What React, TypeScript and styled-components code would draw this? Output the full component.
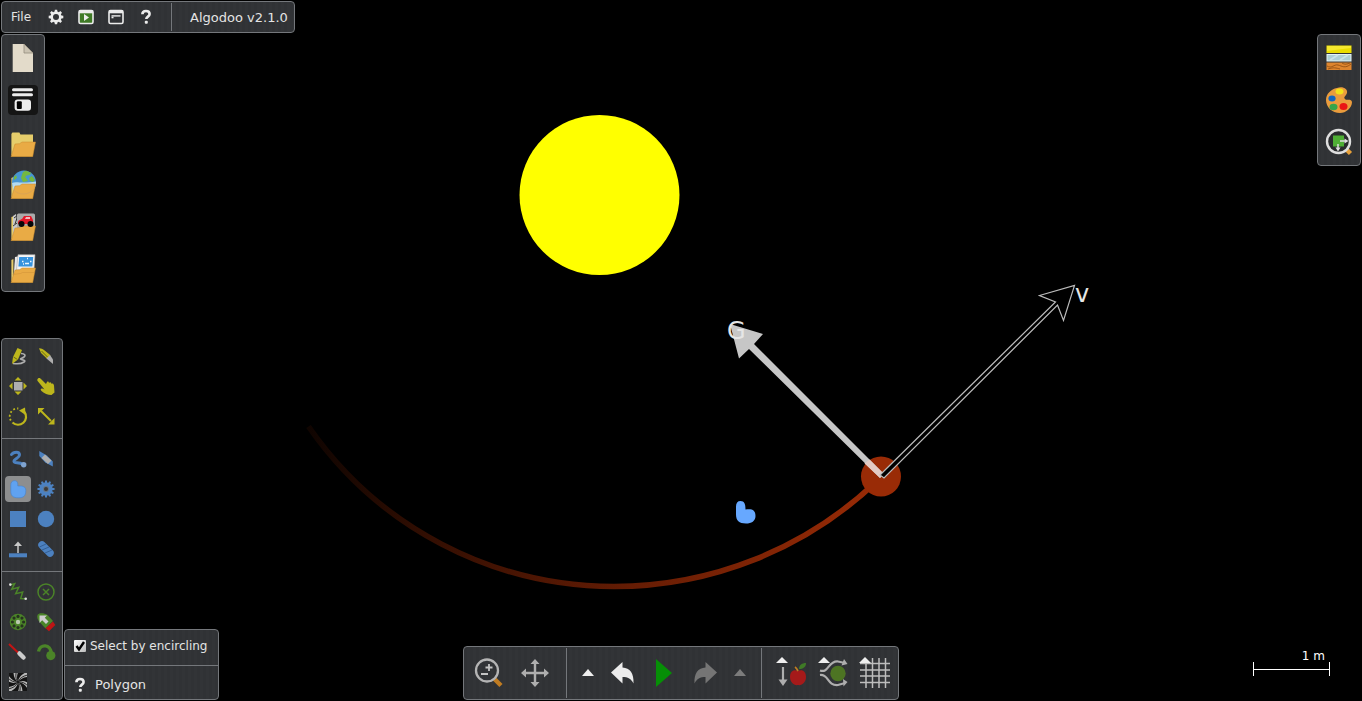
import React from "react";
import styled, { createGlobalStyle } from "styled-components";

const c = {
  panel: "#313336",
  line: "#74777b",
  text: "#e4e4e4",
  yellow: "#bdb61c",
  blue: "#4c81c0",
  blueDark: "#345f94",
  green: "#4b8428",
  grey: "#aeaeae",
  white: "#ececec",
  red: "#c41414",
  orange: "#e9ab45",
};

const GlobalStyle = createGlobalStyle`
  * { box-sizing: border-box; }
  body { margin: 0; background: #000; }
  button, label, a { font: inherit; color: inherit; }
`;

const Page = styled.div`
  position: relative;
  display: flex;
  flex-direction: column;
  min-height: 100vh;
  padding: 1px;
  overflow: hidden;
  background: #000;
  color: ${c.text};
  font: 12px/16px "DejaVu Sans", Verdana, sans-serif;
`;

const Scene = styled.svg`
  position: absolute;
  inset: 0;
  width: 100%;
  height: 100%;
`;

const panel = `
  position: relative;
  background: repeating-linear-gradient(90deg, #303235 0 3px, #323437 3px 6px);
  border: 1px solid ${c.line};
  border-radius: 4px;
`;

const MenuBar = styled.header`
  ${panel}
  align-self: flex-start;
  display: flex;
  height: 32px;
`;

const MenuItems = styled.nav`
  display: flex;
  align-items: center;
  padding: 0 10px 0 9px;
`;

const Title = styled.div`
  margin: 1px 0;
  padding: 1px 6px 0 18px;
  border-left: 1px solid ${c.line};
  font-size: 13px;
  line-height: 28px;
`;

const Btn = styled.button<{ $w: number; $h: number; $bg?: string }>`
  display: flex;
  align-items: center;
  justify-content: center;
  width: ${(p) => p.$w}px;
  height: ${(p) => p.$h}px;
  padding: 0;
  border: 0;
  border-radius: 4px;
  background: ${(p) => p.$bg ?? "transparent"};
  svg { display: block; }
`;

const MenuText = styled.button`
  padding: 0;
  margin-right: 10px;
  border: 0;
  background: none;
`;

const Middle = styled.main`
  flex: 1;
  display: flex;
  justify-content: space-between;
  align-items: flex-start;
  margin: 1px 0 46px;
`;

const SidePanel = styled.aside`
  ${panel}
  display: flex;
  flex-direction: column;
  gap: 12px;
  padding: 8px 6px;
`;

const Bottom = styled.footer`
  display: grid;
  grid-template-columns: 1fr auto 1fr;
  align-items: end;
`;

const LeftTools = styled.div`
  display: flex;
  align-items: flex-end;
  gap: 1px;
`;

const ToolPanel = styled.section`
  ${panel}
`;

const ToolGroup = styled.div`
  display: grid;
  grid-template-columns: 26px 26px;
  gap: 4px 2px;
  padding: 7px 3px 9px;
  & + & { border-top: 1px solid ${c.line}; }
  &:first-child { padding-top: 4px; }
  &:last-child { padding-bottom: 4px; }
`;

const Options = styled.section`
  ${panel}
  width: 155px;
`;

const CheckRow = styled.label`
  display: flex;
  align-items: center;
  gap: 4px;
  height: 35px;
  padding: 0 0 4px 9px;
  white-space: nowrap;
`;

const Check = styled.input`
  appearance: none;
  width: 12px;
  height: 12px;
  margin: 0;
  border-radius: 1px;
  background: linear-gradient(135deg, #fff, #bbb);
  &:checked {
    background: url("data:image/svg+xml,%3Csvg xmlns='http://www.w3.org/2000/svg' viewBox='0 0 12 12'%3E%3Cpath d='M2.5 6l2.5 3.5L10 2' fill='none' stroke='black' stroke-width='2.4'/%3E%3C/svg%3E"),
      linear-gradient(135deg, #fff, #bbb);
  }
`;

const HelpRow = styled.div`
  display: flex;
  align-items: center;
  gap: 9px;
  height: 34px;
  padding: 4px 0 0 9px;
  border-top: 1px solid ${c.line};
  font-size: 13px;
`;

const Dock = styled.nav`
  ${panel}
  display: flex;
  height: 54px;
`;

const DockGroup = styled.div<{ $pad: string; $gap?: number }>`
  display: flex;
  align-items: center;
  gap: ${(p) => p.$gap ?? 0}px;
  margin: 1px 0;
  padding: ${(p) => p.$pad};
  & + & { border-left: 1px solid ${c.line}; }
`;

const Scale = styled.div`
  position: relative;
  justify-self: end;
  width: 77px;
  margin: 0 31px 24px 0;
`;

const ScaleLabel = styled.div`
  padding-right: 5px;
  text-align: right;
  line-height: 12px;
  color: #fff;
`;

const ScaleLine = styled.div`
  display: flex;
  align-items: center;
  height: 14px;
  border: solid #fff;
  border-width: 0 1px;
  &::before { content: ""; flex: 1; height: 1px; background: #fff; }
`;

const Svg = ({ w = 26, h = w, children }: { w?: number; h?: number; children: React.ReactNode }) => (
  <svg width={w} height={h} viewBox={`0 0 ${w} ${h}`} fill="none" aria-hidden="true">{children}</svg>
);

const gearPath = (cx: number, cy: number, ri: number, ro: number, n: number) => {
  const pts: string[] = [];
  for (let i = 0; i < n; i++) {
    [[-0.32, ri], [-0.2, ro], [0.2, ro], [0.32, ri]].forEach(([o, r]) => {
      const a = ((i + o) / n) * Math.PI * 2 - Math.PI / 2;
      pts.push(`${(cx + r * Math.cos(a)).toFixed(2)} ${(cy + r * Math.sin(a)).toFixed(2)}`);
    });
  }
  return `M${pts.join("L")}Z`;
};

const Question = () => (
  <Svg w={12} h={16}>
    <path d="M2.4 5.2C2.4 2.8 4 2 6 2s3.6 1 3.6 3c0 2.6-3.3 2.6-3.3 5" stroke={c.white} strokeWidth="2.6" />
    <rect x="4.8" y="11.8" width="3" height="3" rx="1" fill={c.white} />
  </Svg>
);

const menuIcons: [string, React.ReactNode][] = [
  ["Settings", <Svg w={16}><path d={gearPath(8, 8, 5.6, 7.4, 8)} fill={c.white} /><circle cx="8" cy="8" r="3" fill={c.panel} /></Svg>],
  ["Play scenes", <Svg w={16}><rect x="1" y="1.5" width="14" height="13" rx="1.5" fill="#3f7a26" stroke={c.white} strokeWidth="1.6" /><path d="M1 2.8h14" stroke={c.white} strokeWidth="3" /><path d="M6 5l5 3.6L6 12z" fill={c.white} /></Svg>],
  ["Console", <Svg w={16}><rect x="1" y="1.5" width="14" height="13" rx="1.5" stroke={c.white} strokeWidth="1.6" /><path d="M1 2.8h14" stroke={c.white} strokeWidth="3" /><path d="M3.5 8.5h2" stroke={c.white} strokeWidth="1.6" /><path d="M3.5 6.9h9" stroke={c.white} strokeWidth="1.4" /></Svg>],
  ["Help", <Question />],
];

const Front = () => <path d="M7 17l4.500-.3 2.500-1.700h13.5L24.7 29.7H3z" fill={c.orange} stroke="#c98a2c" strokeWidth=".5" />;
const Back = () => <path d="M3.4 28V7l1-1.5h7l1 2H25V20L6 29z" fill="#e6cd6b" />;

const fileIcons: [string, React.ReactNode, string?][] = [
  ["New scene", <Svg w={30}><path d="M4.7 1H16l9 9v19H4.7z" fill="#e3dbca" /><path d="M16 1l9 9h-9z" fill="#cbc3b2" stroke="#948d7e" strokeWidth=".8" /></Svg>],
  ["Save scene", <Svg w={30}><path d="M5.5 4.8h18M5.5 9.8h18" stroke={c.white} strokeWidth="3" strokeLinecap="round" /><rect x="6.6" y="14.4" width="16.4" height="11.4" rx="3" fill={c.white} /><rect x="8.8" y="16.3" width="5" height="7.6" rx="1" fill="#000" /></Svg>, "#151515"],
  ["Load scene", <Svg w={30}><Back /><Front /></Svg>],
  ["Browse online scenes", <Svg w={30}>
    <path d="M3.4 28V9l2-1 2 2v16z" fill="#e6cd6b" />
    <circle cx="16" cy="13.5" r="12" fill="#4795d2" />
    <path d="M4 14C8 12 14 15 28 12.500c0 5-2 9-5 11H6z" fill="#b5dcf0" />
    <path d="M15 3l3-1.200 5 2-1 2-4 1-1 3-4-1 1-3zM13 9l5 0 2 3-5 1zM21 9l3-2 3 4-2 2-3-1zM6 8l2-2 1 3-3 2z" fill="#74b83f" />
    <Front /><path d="M6 21c4 5 14 6 20-1" stroke="#dba455" strokeWidth="1" />
  </Svg>],
  ["Components", <Svg w={30}>
    <path d="M3.4 28V6l3-1v22z" fill="#e6cd6b" /><path d="M5 26V5l3-2 3 22z" fill="#c8c8c8" />
    <path d="M6 7l4-3-3 9M5 15l4-3" stroke="#333" strokeWidth="1" />
    <rect x="9" y="2.500" width="18" height="14.500" rx="1.5" fill="#aaa" />
    <path d="M10 12c0-3 2-3 4-4l2-3h7l2 4v4H10z" fill="#e3192a" /><path d="M17 8l1-2h4v2z" fill="#f6b6bb" />
    <Front /><circle cx="13.5" cy="13" r="3" fill="#080808" /><circle cx="22.5" cy="13" r="3" fill="#080808" />
  </Svg>],
  ["Scenes and images", <Svg w={30}>
    <path d="M3.4 28V7l2-1v21z" fill="#e6cd6b" /><path d="M5.5 26L7 4l5-1v20z" fill="#e8e8e8" />
    <path d="M10 1.700h17L26 17H8.500z" fill="#f5f5f5" stroke="#aaa" strokeWidth=".6" />
    <path d="M11.200 4h14l-.8 9.500h-14z" fill="#3793de" /><path d="M14 8.500h1.500M17 10.500h4M22 8.500h1.500M19 5.500h1M15 11h1" stroke="#e9f5ff" strokeWidth="1.4" />
    <Front /><path d="M4.500 21.500l8-1 2-1h12" stroke="#cf9138" strokeWidth=".5" />
  </Svg>],
];

const rightIcons: [string, React.ReactNode][] = [
  ["Materials", <Svg w={30}>
    <rect x="2.500" y="2.500" width="25" height="7.500" fill="#eadd00" /><path d="M3 3h24v2L3 8z" fill="#fff45c" opacity=".5" />
    <rect x="3" y="11.500" width="24" height="6.500" fill="#accfd5" stroke="#e4f4f6" /><path d="M6 17l8-5M16 17l8-5" stroke="#c8e2e6" strokeWidth="2" />
    <rect x="2.500" y="19.500" width="25" height="7.500" fill="#dd852e" /><path d="M3 23c5 3 7-2 11-1s7 4 13-1M4 26c6-2 8-1 12 0M18 20c3 2 5 1 8 0" stroke="#8a4a10" strokeWidth=".8" />
  </Svg>],
  ["Appearance", <Svg w={30}>
    <path d="M13 3c6-2 11 1 10 5-1 3-4 4-2 6s6-1 7 3c0 6-6 11-12 11C8 28 2 22 2 15 2 9 7 4 13 3z" fill="#ea9c3d" />
    <ellipse cx="15.500" cy="6.500" rx="4" ry="3" fill="#f2e21a" /><ellipse cx="8" cy="13.500" rx="3.600" ry="3" fill="#1266c0" />
    <ellipse cx="9.500" cy="22" rx="4" ry="3.200" fill="#35a54a" /><ellipse cx="19.500" cy="21.500" rx="4" ry="3.500" fill="#ea1515" />
  </Svg>],
  ["Visualization", <Svg w={30}>
    <path d="M22 22l4.500 4.500" stroke="#e8a13a" strokeWidth="4.500" /><circle cx="14.500" cy="14.500" r="11.500" fill="#292b2d" stroke="#dedede" strokeWidth="2.400" />
    <rect x="9" y="8.500" width="11" height="11" fill="#4faf35" /><path d="M16 14h5M14 17v5" stroke="#dedede" strokeWidth="1.500" />
    <path d="M20.500 11.500l4 2.500-4 2.500zM11.500 20.500l2.500 4 2.500-4z" fill="#dedede" />
  </Svg>],
];

const Sh = ({ d, s, w = 1.5 }: { d: string; s: string; w?: number }) => <path d={d} stroke={s} strokeWidth={w} />;

const tools: [string, React.ReactNode][][] = [
  [
    ["Sketch", <Svg>
      <Sh d="M16 10.500c4 0 5 2 3 3.500s-5 1.500-2.500 2.500 4.500 1 2.500 2.500-7 2-11 1.500" s={c.grey} w={1.600} />
      <path d="M7 21l1-7 4.500-9 4.500 2-4 9.500z" fill={c.yellow} /><Sh d="M8.500 14l4 2.500" s="#6a6714" w={1} />
    </Svg>],
    ["Cut", <Svg><path d="M6 5.300c3 0 4 1 6 2.500l5.500 4.500-3.500 3.500L8 10z" fill={c.yellow} /><path d="M13.500 15.500l3.500-3.500 3 4.500v4.500z" fill={c.grey} /><Sh d="M8.500 8l6 6" s="#6a6714" w={1} /></Svg>],
    ["Move", <Svg><rect x="9" y="9" width="8.500" height="8.500" fill={c.grey} /><path d="M9.500 7.500L13 4l3.500 3.500zM9.500 18.500L13 22l3.500-3.500zM7.500 9.500L4 13l3.500 3.500zM18.500 9.500L22 13l-3.500 3.500z" fill={c.yellow} /></Svg>],
    ["Drag", <Svg><path d="M5 5.500c1.500-1 2.500 0 3.500 1l4.500 4.500 1-2c1-1 2 0 2 1 1-1.500 2.500-.500 2.500 1 1.500-1 2 0 2.500 1.500l.500 7-3 2.500c-4 0-7-1.500-10-4-2-2 0-3.500 3-1.500L5 8.500C4 7.500 4 6.500 5 5.500z" fill={c.yellow} /></Svg>],
    ["Rotate", <Svg><path d="M19.500 9a8 8 0 0 1-12 10.500" stroke={c.yellow} strokeWidth="2.200" /><path d="M5.800 17.500a8 8 0 0 1 7.500-12" stroke={c.yellow} strokeWidth="1.800" strokeDasharray="1.800 2.200" /><path d="M14 7.500l6-3 .500 7.500z" fill={c.yellow} /></Svg>],
    ["Scale", <Svg><Sh d="M8 8l10 10" s={c.yellow} w={2} /><path d="M5 5h6.500L5 11.500zM21.500 21.500H15l6.500-6.500z" fill={c.yellow} /></Svg>],
  ],
  [
    ["Brush", <Svg><path d="M6.500 8.500c2-3 8-3.500 8 .500 0 3-6 4-5.500 6.500.500 2.500 5 0 9 3" stroke={c.blue} strokeWidth="3" strokeLinecap="round" /><circle cx="18.700" cy="18.800" r="2.700" fill="#7fa3cf" /></Svg>],
    ["Knife", <Svg><path d="M6.300 5l7.500 4.500 6 6v5l-7.500-4-6-6.500z" fill={c.blue} /><path d="M12 8.500l6.500 6-3.500 3.500-6.500-6z" fill={c.grey} /></Svg>],
    ["Polygon", <Svg><path d="M9.500 4.700c2.500 0 3.400 1.500 3.300 5.300 3 0 8-.500 8 4.500 0 5.500-2.500 7.300-7.200 7.300C8 21.800 5.800 20 5.800 15V9c0-2.500 1.200-4.300 3.700-4.300z" fill="#60a2f0" stroke="#4583cc" strokeWidth=".6" /></Svg>],
    ["Gear", <Svg><path d={gearPath(13, 13, 6.600, 8.600, 12)} fill={c.blue} /><circle cx="13" cy="13" r="2.900" fill="#66737f" /><circle cx="13" cy="13" r="2" fill="#3d3a38" /></Svg>],
    ["Box", <Svg><rect x="5" y="5" width="16" height="16" fill={c.blue} /></Svg>],
    ["Circle", <Svg><circle cx="13" cy="13" r="8.200" fill={c.blue} /></Svg>],
    ["Plane", <Svg><rect x="4" y="17.300" width="18" height="4" fill={c.blue} /><Sh d="M13 17V8" s="#c8c8c8" w={1.500} /><path d="M9 10l4-4.500 4 4.500z" fill="#c8c8c8" /></Svg>],
    ["Chain", <Svg><path d="M9 9l8 8" stroke={c.blue} strokeWidth="7.500" strokeLinecap="round" /><Sh d="M6.500 11l6.500-3M9 14l7-3M12 17l7-3" s={c.blueDark} w={1} /></Svg>],
  ],
  [
    ["Spring", <Svg><Sh d="M5.700 5.700l4-1-3 5.600 7-2-3 6.400 7-1.700-2 6.500 4.600.2" s={c.green} w={1.500} /><circle cx="5.300" cy="5.600" r="1.300" fill="#ddd" /><circle cx="20.700" cy="19.800" r="1.300" fill="#ddd" /></Svg>],
    ["Axle", <Svg><circle cx="13" cy="13" r="8" stroke={c.green} strokeWidth="1.500" /><Sh d="M10 10l6 6M16 10l-6 6" s={c.green} /></Svg>],
    ["Fixate", <Svg><circle cx="13" cy="13" r="8.300" fill={c.green} />{[0, 1, 2, 3, 4, 5, 6, 7].map((i) => <circle key={i} cx={13 + 5.600 * Math.cos((i * Math.PI) / 4)} cy={13 + 5.600 * Math.sin((i * Math.PI) / 4)} r="1.600" fill="#26331f" />)}<circle cx="13" cy="13" r="2.200" fill="#b9c9ae" /></Svg>],
    ["Thruster", <Svg><path d="M4.500 6c1-2.500 7-2 10 0l5.500 6-7.500 7.500-6-6.500C5 11 3.500 8.500 4.500 6z" fill={c.green} /><path d="M20 12.500l2.300 3.500-6.300 6.300-3.500-3z" fill="#bd1515" /><path d="M6.500 6.500h7.500l-2.200 2.200 3.700 3.800-2.500 2.500-3.800-3.700L6.500 14z" fill="#ccc" /></Svg>],
    ["Laser", <Svg><Sh d="M4 5l10 9.500" s={c.red} w={2} /><path d="M14.500 14.500l4 4" stroke="#ccc" strokeWidth="4.500" strokeLinecap="round" /></Svg>],
    ["Tracer", <Svg><path d="M5.500 12.500C7 4.500 18 5 18 14" stroke={c.green} strokeWidth="3.400" /><circle cx="17.800" cy="16.600" r="4.600" fill={c.green} /></Svg>],
    ["Texture", <Svg>
      <clipPath id="swirl"><rect x="4" y="4" width="18" height="18" /></clipPath>
      <g clipPath="url(#swirl)">
        <rect x="4" y="4" width="18" height="18" fill="#141414" />
        {Array.from({ length: 12 }, (_, i) => <path key={i} d="M13 13C13.500 9 16 5 23 2.500L26.500 8C20 7.500 15.500 9.500 13 13z" fill="#b8b8b8" transform={`rotate(${i * 30} 13 13)`} opacity={i % 2 ? 0 : 1} />)}
        {Array.from({ length: 6 }, (_, i) => <path key={i} d="M13 13C13.500 10 16 6 23 4" stroke="#141414" strokeWidth=".8" transform={`rotate(${i * 60 + 10} 13 13)`} />)}
      </g>
    </Svg>],
  ],
];

const Tri = ({ fill }: { fill: string }) => <Svg w={12} h={8}><path d="M0 7L6 0l6 7z" fill={fill} /></Svg>;

const undo = "M2 12.500L13.500 2v5.500C21 8 25 13 24.500 23.500 22 18.500 19 17 13.500 17v6.500z";

const SceneView = () => (
  <Scene viewBox="0 0 1362 701" preserveAspectRatio="xMidYMid slice" role="img" aria-label="Planet orbiting a sun">
    <defs>
      <linearGradient id="trail" gradientUnits="userSpaceOnUse" x1="308" y1="0" x2="881" y2="0">
        <stop offset="0" stopColor="#992b06" stopOpacity=".1" />
        <stop offset=".2" stopColor="#992b06" stopOpacity=".32" />
        <stop offset=".55" stopColor="#992b06" stopOpacity=".65" />
        <stop offset="1" stopColor="#992b06" />
      </linearGradient>
    </defs>
    <circle cx="599.500" cy="195" r="80" fill="#ffff00" />
    <path d="M308.500 426.500A371.500 371.500 0 0 0 614 586.500A381 381 0 0 0 876 482" fill="none" stroke="url(#trail)" strokeWidth="5.500" />
    <circle cx="881" cy="476.500" r="20" fill="#992b06" />
    <path d="M884 474L754 344l9-10-33-10 9 34.500 10-9.500 131 129z" fill="#c6c6c6" />
    <path d="M869.500 459.500L884 474l-4 4-15.500-14.500z" fill="#e3cbc4" />
    <path d="M880 475L1055.500 302 1039.500 295.500 1074.500 285.500 1063.500 320.500 1057.500 305 884 478z" fill="#000" stroke="#bcbcbc" strokeWidth="1.200" />
    <g fill="#e6e6e6" fontFamily="DejaVu Sans, sans-serif" fontSize="24">
      <text x="727" y="339">G</text>
      <text x="1075" y="302">v</text>
    </g>
    <path d="M740.500 501c4 0 5 3 5 8.500 6-1 10 0 10 6.500 0 5-4 7.500-9.500 7.500-7 0-10-3-10-9v-8c0-3.500 1.500-5.500 4.500-5.500z" fill="#67a8ff" />
  </Scene>
);

export default function App() {
  return (
    <Page>
      <GlobalStyle />
      <SceneView />
      <MenuBar>
        <MenuItems>
          <MenuText>File</MenuText>
          {menuIcons.map(([n, icon]) => <Btn key={n} $w={30} $h={30} aria-label={n}>{icon}</Btn>)}
        </MenuItems>
        <Title>Algodoo v2.1.0</Title>
      </MenuBar>
      <Middle>
        <SidePanel>
          {fileIcons.map(([n, icon, bg]) => <Btn key={n} $w={30} $h={30} $bg={bg} aria-label={n}>{icon}</Btn>)}
        </SidePanel>
        <SidePanel>
          {rightIcons.map(([n, icon]) => <Btn key={n} $w={30} $h={30} aria-label={n}>{icon}</Btn>)}
        </SidePanel>
      </Middle>
      <Bottom>
        <LeftTools>
          <ToolPanel>
            {tools.map((group, i) => (
              <ToolGroup key={i}>
                {group.map(([n, icon]) => (
                  <Btn key={n} $w={26} $h={26} $bg={n === "Polygon" ? "#8d8e8f" : undefined} aria-label={n}>{icon}</Btn>
                ))}
              </ToolGroup>
            ))}
          </ToolPanel>
          <Options>
            <CheckRow><Check type="checkbox" defaultChecked />Select by encircling</CheckRow>
            <HelpRow><Question />Polygon</HelpRow>
          </Options>
        </LeftTools>
        <Dock>
          <DockGroup $pad="0 10px 0 4px" $gap={4}>
            <Btn $w={42} $h={42} aria-label="Zoom"><Svg w={30}>
              <path d="M20.500 21l6.500 6.500" stroke="#c07c22" strokeWidth="4.500" /><circle cx="13" cy="12.500" r="11" stroke="#b4b4b4" strokeWidth="2.300" />
              <path d="M15 6v7M11.500 9.500h7M7 16h7" stroke="#c4c4c4" strokeWidth="1.800" />
            </Svg></Btn>
            <Btn $w={42} $h={42} aria-label="Pan"><Svg w={30}>
              <path d="M15 4v22M4 15h22" stroke={c.grey} strokeWidth="2.400" /><path d="M10.500 6L15 1l4.500 5zM10.500 24l4.500 5 4.500-5zM6 10.500L1 15l5 4.500zM24 10.500l5 4.500-5 4.500z" fill={c.grey} />
            </Svg></Btn>
          </DockGroup>
          <DockGroup $pad="0 8px">
            <Btn $w={26} $h={42} aria-label="Undo history"><Tri fill="#efefef" /></Btn>
            <Btn $w={42} $h={42} aria-label="Undo"><Svg w={26}><path d={undo} fill={c.white} /></Svg></Btn>
            <Btn $w={42} $h={42} aria-label="Play"><Svg w={18} h={30}><path d="M1 1l16 14L1 29z" fill="#068f06" /></Svg></Btn>
            <Btn $w={42} $h={42} aria-label="Redo"><Svg w={26}><path d={undo} fill="#757575" transform="matrix(-1 0 0 1 26 0)" /></Svg></Btn>
            <Btn $w={26} $h={42} aria-label="Redo history"><Tri fill="#7c7c7c" /></Btn>
          </DockGroup>
          <DockGroup $pad="0 2px 0 8px">
            <Btn $w={42} $h={42} aria-label="Gravity"><Svg w={32}>
              <path d="M1 6l6-6 6 6z" fill="#efefef" /><path d="M8 10v15" stroke={c.grey} strokeWidth="2.200" /><path d="M3.500 22.500L8 29l4.500-6.500z" fill={c.grey} />
              <path d="M23 14c4-2 8 0 8 6 0 5-4 9-8 8-4 1-8-3-8-8 0-6 4-8 8-6z" fill="#a51a1a" />
              <path d="M23 14c-1-2-1.500-3-3-4" stroke="#c07c22" strokeWidth="1.800" /><path d="M24 12c0-4 3-6 7-6 0 4-3 6-7 6z" fill="#3f7a26" />
            </Svg></Btn>
            <Btn $w={42} $h={42} aria-label="Air friction"><Svg w={32}>
              <path d="M1 6l6-6 6 6z" fill="#efefef" />
              <path d="M3 13.500c9 3 8-10 18-9l7 1.500M3 18c9-1 7 11 18 10l7-2" stroke={c.grey} strokeWidth="2.200" />
              <path d="M27 2l3.500 5-6 1.500zM26 22l4.500 3-4 4.500z" fill={c.grey} /><circle cx="21" cy="16.500" r="7.700" fill="#4d7423" />
            </Svg></Btn>
            <Btn $w={42} $h={42} aria-label="Grid"><Svg w={32}>
              <path d="M7 4v27M13.500 1v30M20 1v30M26.500 1v30M1 6.500h30M1 13h30M1 19h30M1 25.500h30" stroke="#bdbdbd" strokeWidth="1.500" />
              <path d="M0 6l6-6 6 6z" fill="#efefef" />
            </Svg></Btn>
          </DockGroup>
        </Dock>
        <Scale>
          <ScaleLabel>1 m</ScaleLabel>
          <ScaleLine />
        </Scale>
      </Bottom>
    </Page>
  );
}
